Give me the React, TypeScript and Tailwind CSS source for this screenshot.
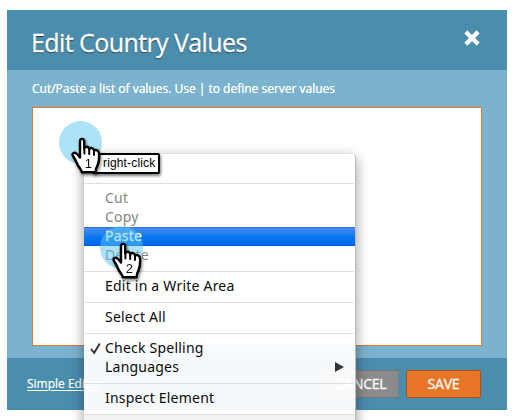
import type { ReactNode } from 'react';

function Hand({ label }: { label: string }) {
  return (
    <svg width="34" height="42" viewBox="0 0 34 42" className="overflow-visible drop-shadow-[1px_2px_1.5px_rgba(0,0,0,0.5)]">
      <path
        d="M10 21.5V5.3C10 2 14.2 2 14.2 5.3V12C15.5 10 19 10.3 19.2 13.2C20.5 11.3 23.8 11.8 24 14.6C25.6 13.2 29 14.3 29.1 17.5C29.3 22 29 25.5 27.8 28.6C26.5 31 25.8 32.8 25.5 36.3H11.8C11.2 33 8.8 31.4 7.6 28.8C6.2 25.4 4.8 22.4 3 20C1.3 17.6 4.2 15.6 6.5 17.6C8 18.8 9 20.2 10 21.5Z"
        fill="#fff"
        stroke="#000"
        strokeWidth="2.4"
        strokeLinejoin="round"
      />
      <path d="M14.4 11.5V17.5M19.2 13V18M24 14.6V19" stroke="#000" strokeWidth="2" strokeLinecap="round" />
      <text x="18.3" y="31.5" textAnchor="middle" fontSize="13" fontFamily="Liberation Sans, sans-serif" fill="#111">
        {label}
      </text>
    </svg>
  );
}

function Separator() {
  return (
    <div className="flex h-3 items-center pt-px pr-px">
      <div className="h-px w-full bg-[#dfdfdf]" />
    </div>
  );
}

function Item({ children, tone = 'text-[#0b0b0b]' }: { children: ReactNode; tone?: string }) {
  return <div className={`relative flex h-[19px] items-center pb-0.5 pl-[21px] whitespace-nowrap ${tone}`}>{children}</div>;
}

export default function App() {
  return (
    <div className="relative h-[420px] w-[517px] overflow-hidden bg-white pt-[10px] pl-[7px] font-['Open_Sans','Noto_Sans',sans-serif]">
      <div className="flex h-[400px] w-[500px] flex-col bg-[#7bb2ce]">
        <header className="flex h-[60px] shrink-0 items-start justify-between bg-[#4a8dad] pr-[27px] pl-6">
          <h1 className="pt-[14px] text-[25px] leading-9 tracking-[-0.58px] whitespace-nowrap text-white [-webkit-text-stroke:0.3px_#fff] [text-shadow:0_1px_1px_#243640]">
            Edit Country Values
          </h1>
          <svg width="16" height="16" viewBox="0 0 16 16" className="mt-5">
            <path d="M3.4 3.4L12.6 12.6M12.6 3.4L3.4 12.6" stroke="#fff" strokeWidth="4.3" strokeLinecap="square" strokeLinejoin="round" />
          </svg>
        </header>
        <main className="flex h-[288px] shrink-0 flex-col px-[25px]">
          <p className="h-[37px] pt-[10px] text-[12px] leading-[18px] whitespace-nowrap text-white [text-shadow:0_0_0.5px_#fff]">
            Cut/Paste a list of values. Use | to define server values
          </p>
          <div className="h-[239px] w-[450px] border border-[#e4792f] bg-white" />
        </main>
        <footer className="flex h-[52px] items-start bg-[#4a8dad] pr-[26px] pl-5">
          <span className="mt-[17px] text-[12px] leading-[18px] whitespace-nowrap text-white underline underline-offset-2 [-webkit-text-stroke:0.2px_#fff]">
            Simple Editor
          </span>
          <button className="mt-3 ml-auto h-7 w-[76px] rounded-[2px] border border-[#7b7b7b] bg-[#8b8b8b] text-[14px] leading-[26px] tracking-[-0.3px] text-white [-webkit-text-stroke:0.3px_#fff]">
            CANCEL
          </button>
          <button className="mt-3 ml-[7px] h-7 w-[75px] rounded-[2px] border border-[#a95220] bg-[#e87626] text-[14px] leading-[26px] tracking-[-0.2px] text-white [-webkit-text-stroke:0.3px_#fff]">
            SAVE
          </button>
        </footer>
      </div>

      <div className="absolute top-[121px] left-[59px] size-[43px] rounded-full bg-[#ade3f8]" />

      <div className="absolute top-[153px] left-[84px] h-[280px] w-[272px] rounded-t-[5px] border-t border-r border-t-[#e2e2e2] border-r-[#b9bdbf] bg-white/95 pt-[23px] font-['Noto_Sans','Open_Sans',sans-serif] text-[14px] tracking-[0.22px] shadow-[0_5px_14px_rgba(0,0,0,0.4)]">
        <Separator />
        <Item tone="text-[#858585]">Cut</Item>
        <Item tone="text-[#858585]">Copy</Item>
        <div className="border-y border-t-[#3a76cf] border-b-[#0057df] bg-linear-to-b from-[#438bee] via-[#0878f0] to-[#0068f3]">
          <div className="-my-px">
            <Item tone="text-white [-webkit-text-stroke:0.3px_#fff]">Paste</Item>
          </div>
        </div>
        <Item tone="text-[#858585]">Delete</Item>
        <Separator />
        <Item>Edit in a Write Area</Item>
        <Separator />
        <Item>Select All</Item>
        <Separator />
        <Item>
          <svg width="12" height="13" viewBox="0 0 12 13" className="absolute top-[3px] left-[6px]">
            <path d="M1 7L4.2 10.8L9.8 1.5" fill="none" stroke="#343434" strokeWidth="1.9" />
          </svg>
          Check Spelling
        </Item>
        <Item>
          Languages
          <svg width="9" height="10" viewBox="0 0 9 10" className="mr-[11px] ml-auto">
            <path d="M0 0L9 5L0 10Z" fill="#343434" />
          </svg>
        </Item>
        <Separator />
        <Item>Inspect Element</Item>
        <Separator />
        <div className="-mt-[5px] h-4 bg-[#f3f3f3]" />
      </div>

      <div className="absolute top-[153px] left-[92px] flex h-[21px] w-[68px] items-center rounded-[2px] border-2 border-black bg-white pb-0.5 pl-[9px] font-['Liberation_Sans',sans-serif] text-[12px] tracking-[0.15px] whitespace-nowrap text-black shadow-[1px_2px_3px_rgba(0,0,0,0.5)]">
        right-click
      </div>
      <div className="absolute top-[136px] left-[70px]">
        <Hand label="1" />
      </div>
      <div className="absolute top-[226px] left-[100px] size-[43px] rounded-full bg-[#5bc8f1]/50" />
      <div className="absolute top-[241px] left-[111px]">
        <Hand label="2" />
      </div>
    </div>
  );
}
